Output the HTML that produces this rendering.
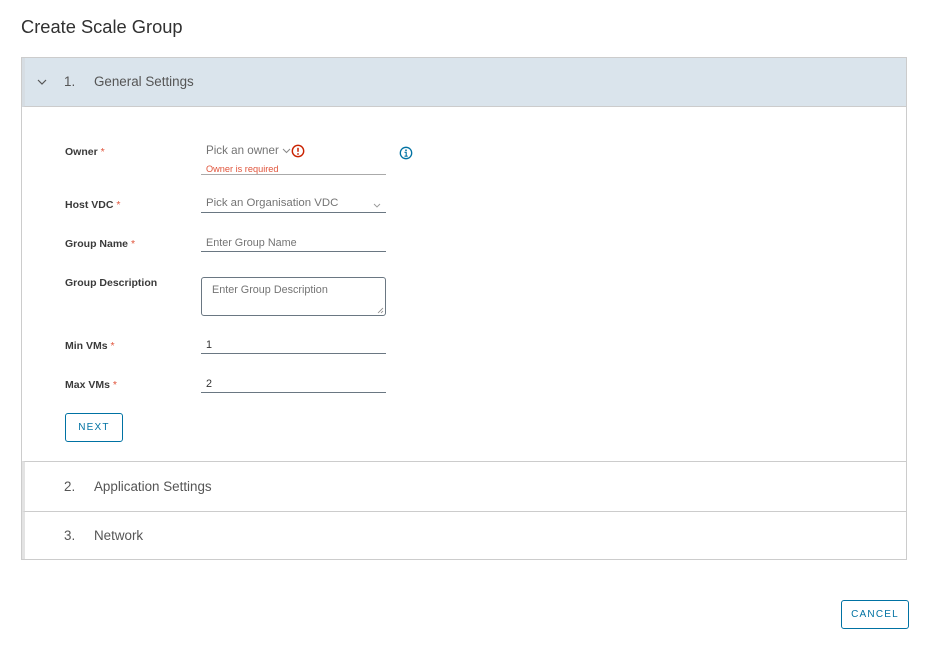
<!DOCTYPE html>
<html><head><style>
body{margin:0;width:925px;height:646px;background:#fff;font-family:"Liberation Sans",sans-serif;color:#333;position:relative;overflow:hidden}
.a{position:absolute}
h1{position:absolute;left:21px;top:16px;margin:0;font-size:18.3px;font-weight:normal;color:#313131}
.box{position:absolute;left:21px;top:57px;width:886px;height:503px;border:1px solid #ccc;box-sizing:border-box}
.hdr{position:absolute;left:0;width:884px;box-sizing:border-box;border-left:3px solid #e3e3e3}
.lbl{position:absolute;left:65px;font-size:10.5px;font-weight:bold;color:#3a3a3a}
.lbl i{color:#e0543b;font-style:normal;font-weight:normal}
.line{position:absolute;left:201px;width:185px;border-bottom:1px solid #6a7782}
.ph{position:absolute;font-size:10.8px;color:#747474}
.btn{position:absolute;border:1px solid #0072a3;border-radius:3px;color:#0072a3;font-size:10px;letter-spacing:1.2px;text-align:center;box-sizing:border-box}
.step{position:absolute;font-size:13.4px;color:#555}
</style></head><body>
<h1>Create Scale Group</h1>
<div class="box">
  <div class="hdr" style="top:0;height:49px;background:#dae4ec;border-bottom:1px solid #ccc;border-left-color:#d6dde3"></div>
  <div class="hdr" style="top:403px;height:50px;border-top:1px solid #ccc"></div>
  <div class="hdr" style="top:453px;height:48px;border-top:1px solid #ccc"></div>
</div>
<svg class="a" style="left:37px;top:78px" width="10" height="8"><path d="M1 2 L5 6 L9 2" fill="none" stroke="#555" stroke-width="1.2"/></svg>
<div class="step" style="left:64px;top:74px">1.</div>
<div class="step" style="left:94px;top:74px">General Settings</div>
<div class="step" style="left:64px;top:479px">2.</div>
<div class="step" style="left:94px;top:479px">Application Settings</div>
<div class="step" style="left:64px;top:528px">3.</div>
<div class="step" style="left:94px;top:528px">Network</div>

<div class="lbl" style="top:146px">Owner <i>*</i></div>
<div class="ph" style="left:206px;top:144px;font-size:11.6px">Pick an owner</div>
<svg class="a" style="left:282px;top:148px" width="9" height="6"><path d="M1 1 L4.5 4.5 L8 1" fill="none" stroke="#888" stroke-width="1"/></svg>
<svg class="a" style="left:291px;top:144px" width="14" height="14"><circle cx="7" cy="7" r="5.7" fill="none" stroke="#c92100" stroke-width="1.4"/><path d="M7 3.8V7.8" stroke="#c92100" stroke-width="1.5"/><circle cx="7" cy="10" r=".9" fill="#c92100"/></svg>
<div class="a" style="left:206px;top:164px;font-size:9.2px;color:#e0543b">Owner is required</div>
<div class="line" style="top:174px;border-color:#aaa"></div>
<svg class="a" style="left:399px;top:146px" width="14" height="14"><circle cx="7" cy="7" r="5.7" fill="none" stroke="#0072a3" stroke-width="1.3"/><circle cx="7" cy="4.3" r=".9" fill="#0072a3"/><path d="M5.5 6.3H7.2V10M5.5 10.2H8.7" fill="none" stroke="#0072a3" stroke-width="1.1"/></svg>

<div class="lbl" style="top:199px">Host VDC <i>*</i></div>
<div class="ph" style="left:206px;top:197px;font-size:11.4px">Pick an Organisation VDC</div>
<svg class="a" style="left:373px;top:203px" width="8" height="5"><path d="M1 1 L4 4 L7 1" fill="none" stroke="#999" stroke-width=".9"/></svg>
<div class="line" style="top:212px"></div>

<div class="lbl" style="top:238px">Group Name <i>*</i></div>
<div class="ph" style="left:206px;top:237px">Enter Group Name</div>
<div class="line" style="top:251px"></div>

<div class="lbl" style="top:277px">Group Description</div>
<div class="a" style="left:201px;top:277px;width:185px;height:39px;border:1px solid #6a7782;border-radius:3px;box-sizing:border-box"></div>
<div class="ph" style="left:212px;top:284px">Enter Group Description</div>
<svg class="a" style="left:377px;top:307px" width="7" height="7"><path d="M1 6L6 1M4 6L6 4" stroke="#888" stroke-width=".8"/></svg>

<div class="lbl" style="top:340px">Min VMs <i>*</i></div>
<div class="ph" style="left:206px;top:339px;color:#333">1</div>
<div class="line" style="top:353px"></div>

<div class="lbl" style="top:379px">Max VMs <i>*</i></div>
<div class="ph" style="left:206px;top:378px;color:#333">2</div>
<div class="line" style="top:392px"></div>

<div class="btn" style="left:65px;top:413px;width:58px;height:29px;line-height:28px">NEXT</div>
<div class="btn" style="left:841px;top:600px;width:68px;height:29px;line-height:28px">CANCEL</div>
</body></html>
